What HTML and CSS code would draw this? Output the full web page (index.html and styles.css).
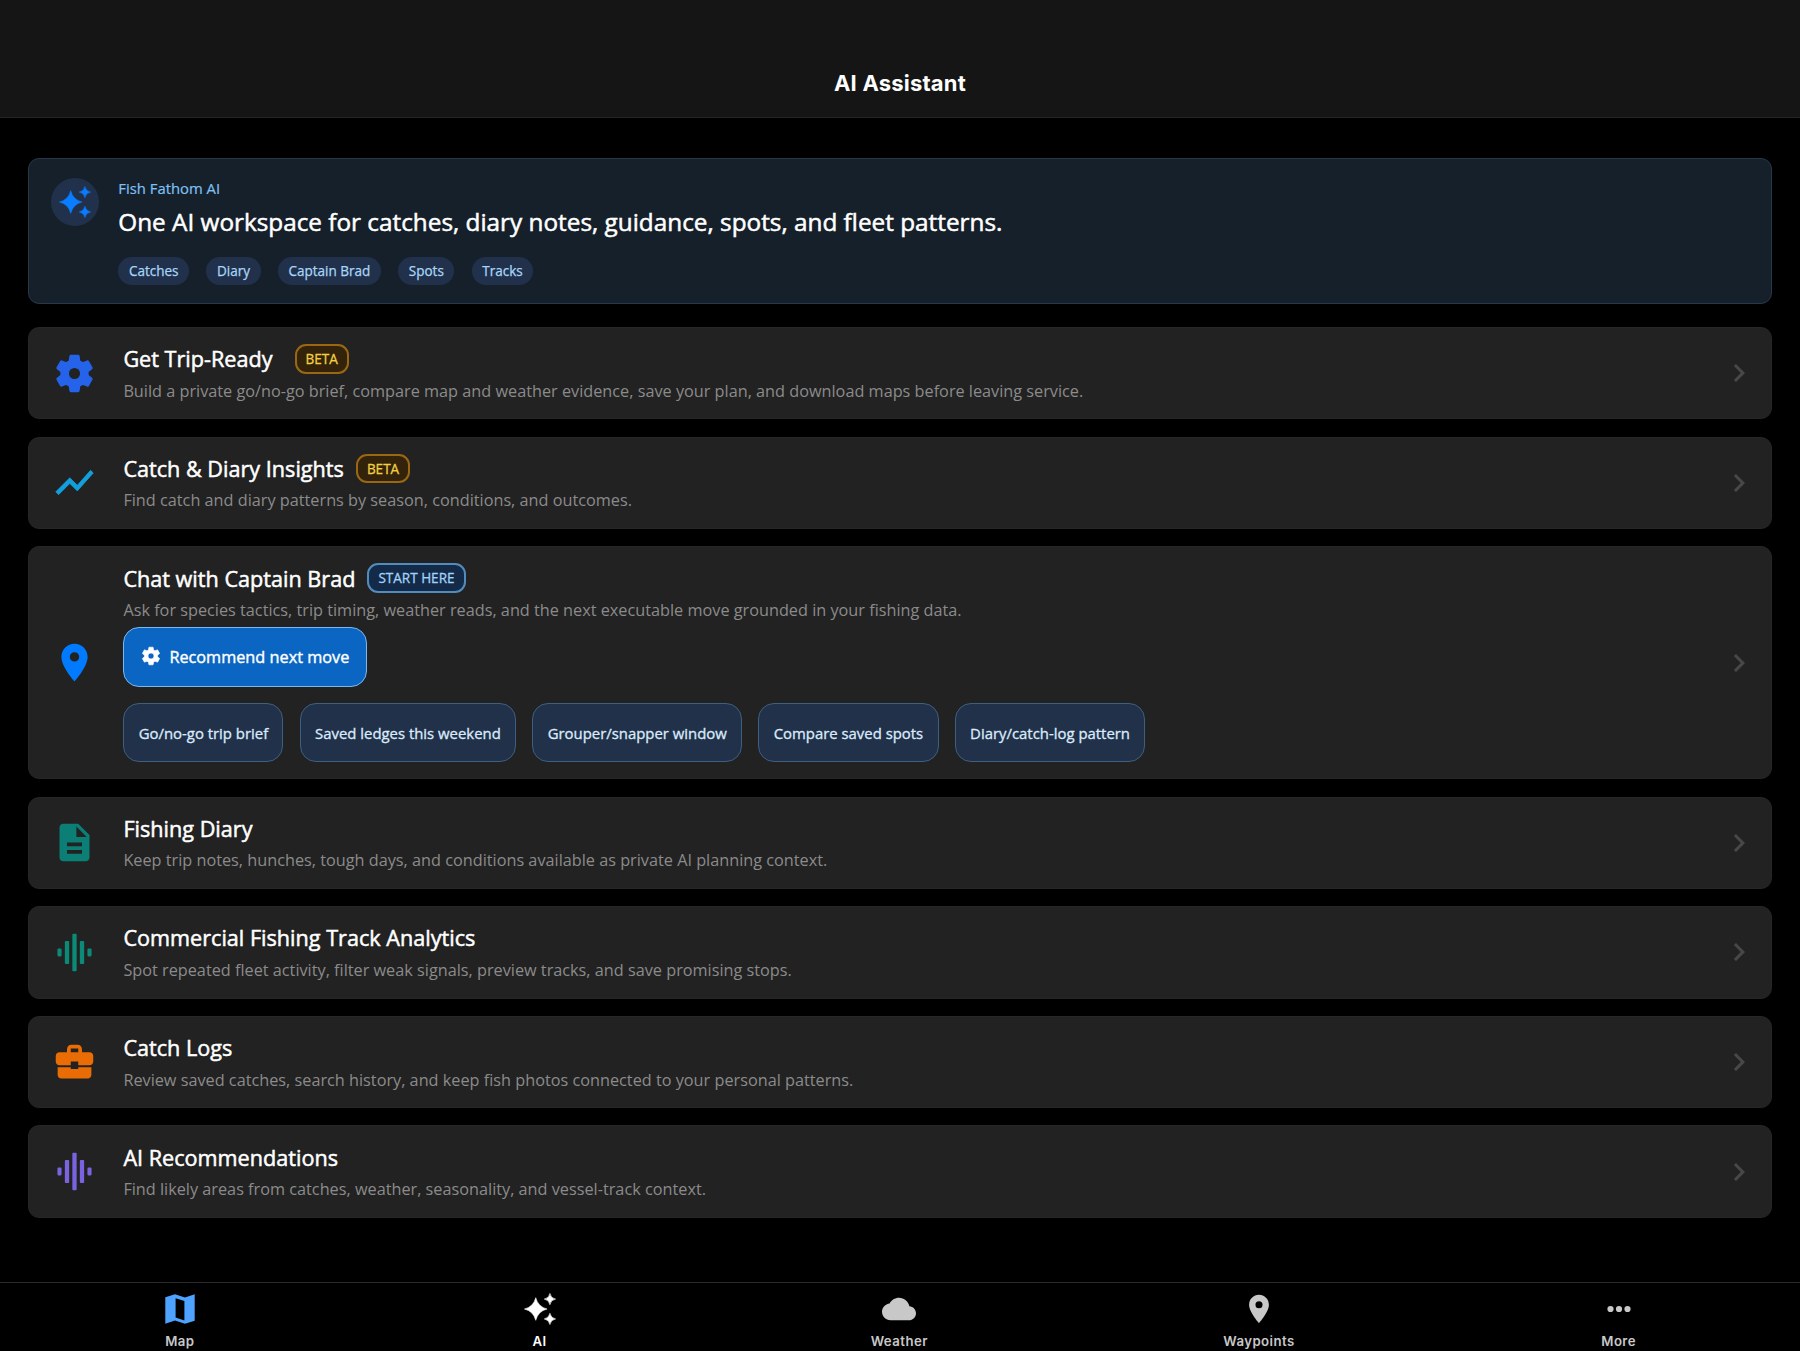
FILE: index.html
```html
<!DOCTYPE html>
<html lang="en">
<head>
<meta charset="utf-8">
<title>AI Assistant</title>
<link rel="stylesheet" href="styles.css">
</head>
<body>
<svg class="sprite" aria-hidden="true">
  <symbol id="gear" viewBox="0 0 24 24"><path stroke="currentColor" stroke-width=".7" stroke-linejoin="round" d="M19.14 12.94c.04-.3.06-.61.06-.94 0-.32-.02-.64-.07-.94l2.03-1.58c.18-.14.23-.41.12-.61l-1.92-3.32c-.12-.22-.37-.29-.59-.22l-2.39.96c-.5-.38-1.03-.7-1.62-.94l-.36-2.54c-.04-.24-.24-.41-.48-.41h-3.84c-.24 0-.43.17-.47.41l-.36 2.54c-.59.24-1.13.57-1.62.94l-2.39-.96c-.22-.08-.47 0-.59.22L2.74 8.87c-.12.21-.08.47.12.61l2.03 1.58c-.05.3-.09.63-.09.94s.02.64.07.94l-2.03 1.58c-.18.14-.23.41-.12.61l1.92 3.32c.12.22.37.29.59.22l2.39-.96c.5.38 1.03.7 1.62.94l.36 2.54c.05.24.24.41.48.41h3.84c.24 0 .44-.17.47-.41l.36-2.54c.59-.24 1.13-.56 1.62-.94l2.39.96c.22.08.47 0 .59-.22l1.92-3.32c.12-.22.07-.47-.12-.61l-2.01-1.58zM12 15.300a3.300 3.300 0 1 1 0-6.600 3.300 3.300 0 0 1 0 6.600z"/></symbol>
  <symbol id="trend" viewBox="0 0 24 24"><path stroke="currentColor" stroke-width=".4" d="M3.5 18.49l6-6.01 4 4L22 6.92l-1.41-1.41-7.09 7.97-4-4L2 16.99z"/></symbol>
  <symbol id="pin" viewBox="0 0 24 24"><path d="M12 2C8.13 2 5 5.13 5 9c0 5.25 7 13 7 13s7-7.75 7-13c0-3.87-3.13-7-7-7zm0 9.5a2.5 2.5 0 0 1 0-5 2.5 2.5 0 0 1 0 5z"/></symbol>
  <symbol id="doc" viewBox="0 0 24 24"><path d="M14 2H6c-1.1 0-1.99.9-1.99 2L4 20c0 1.1.89 2 1.99 2H18c1.1 0 2-.9 2-2V8l-6-6zm2 16H8v-2h8v2zm0-4H8v-2h8v2zm-3-5V3.5L18.5 9H13z"/></symbol>
  <symbol id="wave" viewBox="0 0 24 24"><rect x="2.900" y="9.900" width="2.200" height="4.200" rx=".6"/><rect x="6.850" y="5.900" width="2.300" height="12.200" rx=".5"/><rect x="10.850" y="2" width="2.300" height="20" rx=".5"/><rect x="14.850" y="5.900" width="2.300" height="12.200" rx=".5"/><rect x="18.900" y="9.900" width="2.200" height="4.200" rx=".6"/></symbol>
  <symbol id="case" viewBox="0 0 24 24"><path d="M10 16v-1H3.01L3 19c0 1.11.89 2 2 2h14c1.11 0 2-.89 2-2v-4h-7v1h-4zm10-9h-4.01V5.500C15.990 4 15 3 13.700 3h-3.400C9 3 7.990 4 7.990 5.500V7H4c-1.1 0-2 .9-2 2v3c0 1.11.89 2 2 2h6v-2h4v2h6c1.1 0 2-.9 2-2V9c0-1.1-.9-2-2-2zm-6 0h-4V5h4v2z"/></symbol>
  <symbol id="spark" viewBox="0 0 24 24"><path stroke="currentColor" stroke-width=".4" stroke-linejoin="round" d="M19 9Q19.600 5.600 23 5Q19.600 4.400 19 1Q18.400 4.400 15 5Q18.400 5.600 19 9zM9 4Q7.400 10.400 1 12Q7.400 13.600 9 20Q10.600 13.600 17 12Q10.600 10.400 9 4zM19 15Q18.400 18.400 15 19Q18.400 19.600 19 23Q19.600 19.600 23 19Q19.600 18.400 19 15z"/></symbol>
  <symbol id="chev" viewBox="0 0 24 24"><path d="M10 6L8.59 7.41 13.17 12l-4.58 4.59L10 18l6-6z"/></symbol>
  <symbol id="map" viewBox="0 0 34 34"><path fill-rule="evenodd" d="M2.3 5.3L12 2.3L22 5.5L31.700 2.300V28.700L22 31.700L12 28.500L2.300 31.700ZM12.600 6.300V25.600L21.400 28.400V9.100Z"/></symbol>
  <symbol id="cloud" viewBox="0 0 24 24"><path d="M19.35 10.04C18.67 6.59 15.64 4 12 4 9.11 4 6.6 5.64 5.35 8.04 2.34 8.36 0 10.91 0 14c0 3.31 2.69 6 6 6h13c2.76 0 5-2.24 5-5 0-2.64-2.05-4.78-4.65-4.96z"/></symbol>
  <symbol id="more" viewBox="0 0 24 24"><circle cx="6" cy="12" r="2.2"/><circle cx="12" cy="12" r="2.2"/><circle cx="18" cy="12" r="2.2"/></symbol>
</svg>

<header class="topbar"><h1>AI Assistant</h1></header>

<main class="content">
  <section class="hero">
    <div class="hero-icon"><svg><use href="#spark"/></svg></div>
    <div class="hero-body">
      <p class="eyebrow">Fish Fathom AI</p>
      <h2 class="hero-title">One AI workspace for catches, diary notes, guidance, spots, and fleet patterns.</h2>
      <div class="pills"><span>Catches</span><span>Diary</span><span>Captain Brad</span><span>Spots</span><span>Tracks</span></div>
    </div>
  </section>

  <section class="card">
    <svg class="icon blue"><use href="#gear"/></svg>
    <div class="body">
      <div class="heading"><h3 class="wide">Get Trip-Ready</h3><span class="badge beta">BETA</span></div>
      <p class="desc">Build a private go/no-go brief, compare map and weather evidence, save your plan, and download maps before leaving service.</p>
    </div>
    <svg class="chevron"><use href="#chev"/></svg>
  </section>

  <section class="card">
    <svg class="icon sky"><use href="#trend"/></svg>
    <div class="body">
      <div class="heading"><h3>Catch &amp; Diary Insights</h3><span class="badge beta">BETA</span></div>
      <p class="desc">Find catch and diary patterns by season, conditions, and outcomes.</p>
    </div>
    <svg class="chevron"><use href="#chev"/></svg>
  </section>

  <section class="card">
    <svg class="icon azure"><use href="#pin"/></svg>
    <div class="body">
      <div class="heading"><h3>Chat with Captain Brad</h3><span class="badge start">START HERE</span></div>
      <p class="desc">Ask for species tactics, trip timing, weather reads, and the next executable move grounded in your fishing data.</p>
      <button class="primary"><svg><use href="#gear"/></svg>Recommend next move</button>
      <div class="chips">
        <button>Go/no-go trip brief</button><button>Saved ledges this weekend</button><button>Grouper/snapper window</button><button>Compare saved spots</button><button>Diary/catch-log pattern</button>
      </div>
    </div>
    <svg class="chevron"><use href="#chev"/></svg>
  </section>

  <section class="card">
    <svg class="icon teal"><use href="#doc"/></svg>
    <div class="body">
      <div class="heading"><h3>Fishing Diary</h3></div>
      <p class="desc">Keep trip notes, hunches, tough days, and conditions available as private AI planning context.</p>
    </div>
    <svg class="chevron"><use href="#chev"/></svg>
  </section>

  <section class="card">
    <svg class="icon green"><use href="#wave"/></svg>
    <div class="body">
      <div class="heading"><h3>Commercial Fishing Track Analytics</h3></div>
      <p class="desc">Spot repeated fleet activity, filter weak signals, preview tracks, and save promising stops.</p>
    </div>
    <svg class="chevron"><use href="#chev"/></svg>
  </section>

  <section class="card">
    <svg class="icon orange"><use href="#case"/></svg>
    <div class="body">
      <div class="heading"><h3>Catch Logs</h3></div>
      <p class="desc">Review saved catches, search history, and keep fish photos connected to your personal patterns.</p>
    </div>
    <svg class="chevron"><use href="#chev"/></svg>
  </section>

  <section class="card">
    <svg class="icon violet"><use href="#wave"/></svg>
    <div class="body">
      <div class="heading"><h3>AI Recommendations</h3></div>
      <p class="desc">Find likely areas from catches, weather, seasonality, and vessel-track context.</p>
    </div>
    <svg class="chevron"><use href="#chev"/></svg>
  </section>
</main>

<nav class="tabs">
  <a class="tab map"><svg><use href="#map"/></svg><span>Map</span></a>
  <a class="tab active"><svg><use href="#spark"/></svg><span>AI</span></a>
  <a class="tab"><svg><use href="#cloud"/></svg><span>Weather</span></a>
  <a class="tab"><svg><use href="#pin"/></svg><span>Waypoints</span></a>
  <a class="tab"><svg><use href="#more"/></svg><span>More</span></a>
</nav>
</body>
</html>
```
FILE: styles.css
```css
* { box-sizing: border-box; margin: 0; padding: 0; }
body {
  height: 1351px;
  display: flex;
  flex-direction: column;
  overflow: hidden;
  background: #000;
  color: #fff;
  font-family: "Open Sans", "Noto Sans", sans-serif;
}
h1, h2, h3, p, span, button { white-space: nowrap; font-weight: 400; }
svg { display: block; flex: none; fill: currentColor; }
.sprite { position: absolute; width: 0; height: 0; }

.topbar {
  height: 117.500px;
  padding-top: 67px;
  background: #151515;
  border-bottom: 1px solid #242424;
  text-align: center;
}
.topbar h1 {
  font: 700 22px/32px Inter, sans-serif;
  letter-spacing: .2px;
}

.content {
  flex: 1;
  display: flex;
  flex-direction: column;
  gap: 17.300px;
  padding: 40.200px 27.600px 0;
}

.hero {
  display: flex;
  gap: 19px;
  height: 146.400px;
  margin-bottom: 5.700px;
  padding: 19px 22px;
  background: #16202a;
  border: 1px solid #26384a;
  border-radius: 11px;
}
.hero-icon {
  width: 48.700px;
  height: 48.700px;
  display: grid;
  place-items: center;
  border-radius: 50%;
  background: #21314b;
  color: #0a7cff;
}
.hero-icon svg { width: 34px; height: 34px; }
.eyebrow {
  font-size: 14.850px;
  line-height: 21px;
  color: #7fc0f2;
  -webkit-text-stroke: .2px;
}
.hero-title {
  margin-top: 7.800px;
  font-size: 24.320px;
  line-height: 32px;
  -webkit-text-stroke: .5px;
}
.pills { display: flex; gap: 17.200px; margin-top: 19px; }
.pills span {
  height: 27.300px;
  padding: 0 10.600px;
  border-radius: 14px;
  background: #21314b;
  color: #a9d6f8;
  font-size: 13.540px;
  line-height: 28px;
  -webkit-text-stroke: .25px;
}

.card {
  display: flex;
  align-items: center;
  min-height: 92.300px;
  padding: 16px 14.600px 16px 23.600px;
  background: #222;
  border: 1px solid #262626;
  border-radius: 11px;
}
.icon { width: 45px; height: 45px; }
.body { flex: 1; margin-left: 26.200px; }
.chevron { width: 36px; height: 36px; color: #484848; }
.blue { color: #2563eb; }
.sky { color: #129fdc; }
.azure { color: #007aff; }
.teal { color: #0b7f75; }
.green { color: #0b8a78; }
.orange { color: #ea6c05; }
.violet { color: #7a62e0; }

.heading { display: flex; align-items: center; gap: 12px; height: 29.500px; }
.heading h3 { font-size: 21.630px; line-height: 29px; -webkit-text-stroke: .5px; }
.heading .wide { margin-right: 10px; }
.badge {
  height: 29.500px;
  padding: 0 9px;
  border: 2px solid;
  border-radius: 11px;
  font-size: 13.540px;
  line-height: 26px;
  -webkit-text-stroke: .3px;
}
.beta { background: #33230b; border-color: #9a6812; color: #f2cf42; }
.start { background: #132b48; border-color: #528cbd; color: #a3d2f8; }
.desc { margin-top: 6.300px; font-size: 16.250px; line-height: 22.500px; color: #8b8b8b; }

.primary, .chips button {
  height: 59.500px;
  border: 1px solid;
  border-radius: 16px;
  font-family: inherit;
}
.primary {
  display: flex;
  align-items: center;
  gap: 7px;
  margin-top: 5.500px;
  padding: 1px 16.500px 0 16px;
  background: #0a66c2;
  border-color: #7ab8ee;
  color: #fff;
  font-size: 16.270px;
  -webkit-text-stroke: .4px;
}
.primary svg { width: 22px; height: 22px; margin-top: -2px; }
.chips { display: flex; gap: 16.300px; margin-top: 16.300px; }
.chips button {
  padding: 1px 14.300px 0;
  background: #21314a;
  border-color: #3d5f80;
  color: #dcebfb;
  font-size: 14.900px;
  -webkit-text-stroke: .3px;
}

.tabs {
  display: grid;
  grid-template-columns: repeat(5, 1fr);
  height: 69px;
  padding-right: 1.500px;
  border-top: 1px solid #2a2a2a;
}
.tab {
  display: flex;
  flex-direction: column;
  align-items: center;
  gap: 6px;
  padding-top: 9px;
  color: #c8c8c8;
}
.tab svg { width: 34px; height: 34px; }
.tab span { font: 600 13.200px/18px Inter, sans-serif; letter-spacing: .45px; }
.tab.map svg { color: #4da3ff; }
.tab.active { color: #fff; }
```
